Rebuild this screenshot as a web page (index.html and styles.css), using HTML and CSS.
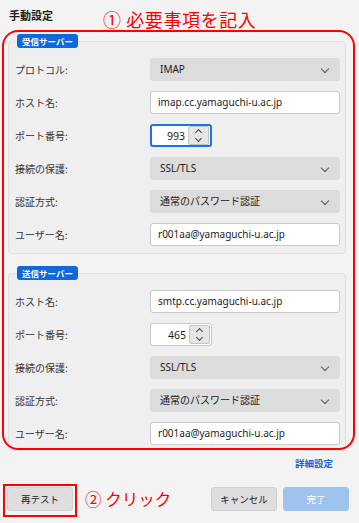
FILE: index.html
```html
<!DOCTYPE html>
<html lang="ja">
<head>
  <meta charset="UTF-8" />
  <meta name="viewport" content="width=device-width, initial-scale=1.0">
  <title>手動設定</title>
  <link rel="stylesheet" href="styles.css">
</head>
<body>
  <div class="page">
    <h1 class="title">手動設定</h1>

    <fieldset class="server">
      <legend>受信サーバー</legend>
      <div class="row">
        <label>プロトコル:</label>
        <div class="select">IMAP<span class="chev"></span></div>
      </div>
      <div class="row">
        <label>ホスト名:</label>
        <div class="text">imap.cc.yamaguchi-u.ac.jp</div>
      </div>
      <div class="row">
        <label>ポート番号:</label>
        <div class="spin focus"><span class="num">993</span><span class="arrows"><i class="up"></i><i class="down"></i></span></div>
      </div>
      <div class="row">
        <label>接続の保護:</label>
        <div class="select">SSL/TLS<span class="chev"></span></div>
      </div>
      <div class="row">
        <label>認証方式:</label>
        <div class="select">通常のパスワード認証<span class="chev"></span></div>
      </div>
      <div class="row">
        <label>ユーザー名:</label>
        <div class="text">r001aa@yamaguchi-u.ac.jp</div>
      </div>
    </fieldset>

    <fieldset class="server second">
      <legend>送信サーバー</legend>
      <div class="row">
        <label>ホスト名:</label>
        <div class="text">smtp.cc.yamaguchi-u.ac.jp</div>
      </div>
      <div class="row">
        <label>ポート番号:</label>
        <div class="spin"><span class="num">465</span><span class="arrows"><i class="up"></i><i class="down"></i></span></div>
      </div>
      <div class="row">
        <label>接続の保護:</label>
        <div class="select">SSL/TLS<span class="chev"></span></div>
      </div>
      <div class="row">
        <label>認証方式:</label>
        <div class="select">通常のパスワード認証<span class="chev"></span></div>
      </div>
      <div class="row">
        <label>ユーザー名:</label>
        <div class="text">r001aa@yamaguchi-u.ac.jp</div>
      </div>
    </fieldset>

    <div class="advanced"><a href="#">詳細設定</a></div>

    <div class="buttons">
      <button class="btn">再テスト</button>
      <div class="right">
        <button class="btn">キャンセル</button>
        <button class="btn done">完了</button>
      </div>
    </div>

    <!-- 注釈 -->
    <div class="mark mark-form"></div>
    <div class="mark mark-test"></div>
    <p class="note note-1">① 必要事項を記入</p>
    <p class="note note-2">② クリック</p>
  </div>
</body>
</html>
```

FILE: styles.css
```css
body {
  margin: 0;
  background: #f3f3f3;
  font-family: "Noto Sans", "Noto Sans CJK JP", sans-serif;
  color: #1b1b1b;
}
.page {
  position: relative;
  width: 359px;
  height: 523px;
}
.title {
  margin: 0;
  height: 34px;
  line-height: 30px;
  padding-left: 9px;
  font-size: 11px;
  font-weight: bold;
  font-family: "Noto Sans CJK JP", sans-serif;
}
.server {
  box-sizing: border-box;
  width: 338px;
  margin: 0 0 0 8px;
  padding: 10px 5px 7px 6px;
  border: 1px solid #e0e0e0;
  border-radius: 4px;
  background: #efefef;
  display: flex;
  flex-direction: column;
  gap: 10px;
}
.server.second {
  margin-top: 12px;
  padding-bottom: 5px;
}
.server legend {
  margin-left: 2px;
  padding: 0 5px;
  height: 14px;
  line-height: 14px;
  border-radius: 3px;
  background: #1168d8;
  color: #fff;
  font-size: 8.5px;
  font-weight: bold;
  font-family: "Noto Sans CJK JP", sans-serif;
}
.row {
  display: grid;
  grid-template-columns: 135px 190px;
  align-items: center;
  height: 23px;
}
.row label {
  font-size: 10px;
  color: #333;
  font-family: "Noto Sans CJK JP", sans-serif;
}
.text,
.select {
  box-sizing: border-box;
  height: 23px;
  line-height: 21px;
  padding-left: 7px;
  font-size: 10px;
  border-radius: 3px;
  font-family: "Noto Sans", "Noto Sans CJK JP", sans-serif;
}
.text {
  background: #fff;
  border: 1px solid #c9c9c9;
}
.select {
  position: relative;
  background: #dcdcdc;
  border: 1px solid #dcdcdc;
  padding-left: 9px;
}
.chev {
  position: absolute;
  right: 11px;
  top: 7px;
  width: 5px;
  height: 5px;
  border-right: 1px solid #555;
  border-bottom: 1px solid #555;
  transform: rotate(45deg);
}
.spin {
  box-sizing: border-box;
  width: 62px;
  height: 23px;
  display: flex;
  align-items: center;
  background: #fff;
  border: 1px solid #c9c9c9;
  border-radius: 3px;
  font-size: 10.5px;
}
.spin.focus {
  border: 2px solid #1a73e8;
}
.spin .num {
  flex: 1;
  text-align: right;
  padding-right: 3px;
}
.arrows {
  box-sizing: border-box;
  width: 21px;
  height: 19px;
  margin-right: 1px;
  background: #e6e6e6;
  border: 1px solid #c4c4c4;
  border-radius: 2px;
  display: flex;
  flex-direction: column;
  align-items: center;
  justify-content: space-around;
}
.arrows i {
  display: block;
  width: 4px;
  height: 4px;
  border-left: 1px solid #444;
  border-top: 1px solid #444;
}
.arrows .up {
  transform: rotate(45deg);
  margin-top: 3px;
}
.arrows .down {
  transform: rotate(225deg);
  margin-bottom: 3px;
}
.advanced {
  display: flex;
  justify-content: flex-end;
  padding: 6px 26px 0 0;
  height: 22px;
  line-height: 12px;
}
.advanced a {
  color: #1a66cc;
  font-size: 9.5px;
  font-weight: bold;
  text-decoration: none;
  font-family: "Noto Sans CJK JP", sans-serif;
}
.buttons {
  display: flex;
  justify-content: space-between;
  padding: 8px 10px 0 7px;
}
.right {
  display: flex;
  gap: 6px;
}
.btn {
  width: 66px;
  height: 24px;
  border: 1px solid #cfcfcf;
  border-radius: 3px;
  background: #dedede;
  color: #1b1b1b;
  font-size: 9.5px;
  font-family: "Noto Sans CJK JP", sans-serif;
  padding: 0;
}
.btn.done {
  border-color: #9ec3ef;
  background: #9ec3ef;
  color: #fff;
}
.mark {
  position: absolute;
  box-sizing: border-box;
  border: 2px solid #ff0000;
}
.mark-form {
  left: 2px;
  top: 30px;
  width: 353px;
  height: 420px;
  border-radius: 16px;
}
.mark-test {
  left: 3px;
  top: 484px;
  width: 74px;
  height: 33px;
}
.note {
  position: absolute;
  margin: 0;
  color: #ff0000;
  font-size: 17px;
  line-height: 20px;
  font-family: "Noto Sans CJK JP", sans-serif;
  white-space: nowrap;
}
.note-1 {
  left: 103px;
  top: 9px;
  font-size: 18px;
  letter-spacing: 0.6px;
}
.note-2 {
  left: 85px;
  top: 489px;
  font-size: 16.5px;
}
```
